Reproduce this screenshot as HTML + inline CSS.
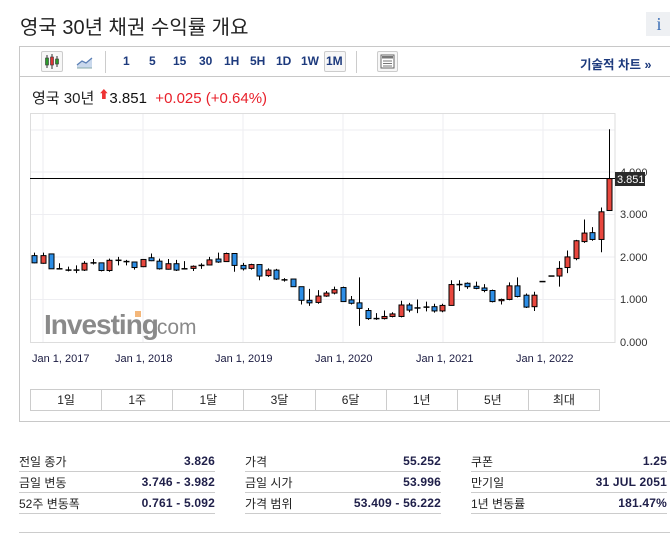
<!DOCTYPE html>
<html><head><meta charset="utf-8"><style>
*{margin:0;padding:0;box-sizing:border-box}
body{width:670px;height:542px;overflow:hidden;background:#fff;font-family:"Liberation Sans","Noto Sans CJK KR",sans-serif;color:#222;position:relative}
.abs{position:absolute}
.title{left:20px;top:11px;font-size:20px;color:#222;white-space:nowrap}
.info{left:646px;top:12px;width:26px;height:24px;background:#eef0f3;color:#3a6db5;font-family:"Liberation Serif",serif;font-size:18px;text-align:center;line-height:24px}
.panel{left:19px;top:46px;width:660px;height:376px;border:1px solid #c8c8c8;border-right:none}
.tb{left:19px;top:46px;width:660px;height:31px;border-bottom:1px solid #c8c8c8}
.tf{top:54px;font-size:12px;font-weight:bold;color:#1d3a7d;white-space:nowrap}
.box{border:1px solid #ccc;border-radius:2px;background:#f7f7f7}
.q{top:87px;left:32px;font-size:15px;white-space:nowrap}
.lab{font-size:11px;color:#1a1a40;white-space:nowrap}
.rng{left:30px;top:389px;width:570px;height:22px;display:flex;border:1px solid #ccc}
.rng div{flex:1;border-right:1px solid #ccc;text-align:center;font-size:12px;line-height:20px;color:#222}
.rng div:last-child{border-right:none}
.st{font-size:12px;white-space:nowrap}
.row{position:absolute;height:21px;border-bottom:1px solid #ccc;display:flex;justify-content:space-between;align-items:center}
.row b{font-weight:bold;color:#20204a;letter-spacing:0.2px}
</style></head><body>
<div class="abs title">영국 30년 채권 수익률 개요</div>
<div class="abs info">i</div>
<div class="abs panel"></div>
<div class="abs tb"></div>
<div class="abs box" style="left:41px;top:51px;width:22px;height:21px"></div>
<svg class="abs" style="left:41px;top:51px" width="22" height="21">
<line x1="6" y1="4" x2="6" y2="17" stroke="#333"/><rect x="4.5" y="7" width="3" height="7" fill="#2a9a2a" stroke="#333" stroke-width=".6"/>
<line x1="11" y1="3" x2="11" y2="18" stroke="#333"/><rect x="9.5" y="6" width="3" height="8" fill="#d33" stroke="#333" stroke-width=".6"/>
<line x1="16" y1="5" x2="16" y2="16" stroke="#333"/><rect x="14.5" y="8" width="3" height="5" fill="#2a9a2a" stroke="#333" stroke-width=".6"/>
</svg>
<svg class="abs" style="left:76px;top:54px" width="18" height="16"><path d="M1 11 L6 7 L10 9 L16 4 L16 14 L1 14Z" fill="#c9d8ec"/><path d="M1 11 L6 7 L10 9 L16 4" stroke="#5b7fb5" fill="none" stroke-width="1.3"/><line x1="1" y1="14" x2="16" y2="14" stroke="#8aa" /></svg>
<div class="abs" style="left:105px;top:51px;width:1px;height:22px;background:#ccc"></div>
<div class="abs tf" style="left:123px">1</div>
<div class="abs tf" style="left:149px">5</div>
<div class="abs tf" style="left:173px">15</div>
<div class="abs tf" style="left:199px">30</div>
<div class="abs tf" style="left:224px">1H</div>
<div class="abs tf" style="left:250px">5H</div>
<div class="abs tf" style="left:276px">1D</div>
<div class="abs tf" style="left:301px">1W</div>
<div class="abs box" style="left:324px;top:51px;width:22px;height:21px"></div>
<div class="abs tf" style="left:326px">1M</div>
<div class="abs" style="left:356px;top:51px;width:1px;height:22px;background:#ccc"></div>
<div class="abs box" style="left:377px;top:51px;width:21px;height:21px"></div>
<svg class="abs" style="left:377px;top:51px" width="21" height="21"><rect x="4" y="4" width="13" height="13" fill="#fff" stroke="#666"/><rect x="5" y="5" width="11" height="2.5" fill="#777"/><line x1="6" y1="10" x2="15" y2="10" stroke="#777"/><line x1="6" y1="12.5" x2="15" y2="12.5" stroke="#777"/><line x1="6" y1="15" x2="15" y2="15" stroke="#777"/></svg>
<div class="abs tf" style="left:580px;font-size:12.5px">기술적 차트 »</div>
<div class="abs q">영국 30년 <span style="color:#e33;font-size:11px;position:relative;top:-5px">&#x2B06;</span><span style="color:#111">3.851</span> <span style="color:#e8202a">&nbsp;+0.025 (+0.64%)</span></div>

<svg class="abs" style="left:0;top:0" width="670" height="420" id="ch">
<g stroke="#eeeef2" stroke-width="1">
<line x1="43" y1="113" x2="43" y2="342"/><line x1="143" y1="113" x2="143" y2="342"/><line x1="243" y1="113" x2="243" y2="342"/><line x1="343" y1="113" x2="343" y2="342"/><line x1="443" y1="113" x2="443" y2="342"/><line x1="543" y1="113" x2="543" y2="342"/>
<line x1="30" y1="130" x2="615" y2="130"/><line x1="30" y1="172" x2="615" y2="172"/><line x1="30" y1="214.5" x2="615" y2="214.5"/><line x1="30" y1="257" x2="615" y2="257"/><line x1="30" y1="299.5" x2="615" y2="299.5"/>
</g>
<rect x="30.5" y="113.5" width="584.5" height="229" fill="none" stroke="#ddd"/>
<text x="44" y="334" font-family="Liberation Sans,sans-serif" font-weight="bold" font-size="28" fill="#8a8a8a" letter-spacing="-1">Investing</text>
<text x="151" y="334" font-family="Liberation Sans,sans-serif" font-size="21" fill="#8a8a8a">.com</text>
<rect x="135" y="311" width="6" height="6" fill="#f4b77a"/>
<g id="cd"></g>
<line x1="30" y1="178.5" x2="615" y2="178.5" stroke="#000"/>
<g font-family="Liberation Sans,sans-serif" font-size="11" fill="#333">
<text x="620" y="176">4.000</text><text x="620" y="218">3.000</text><text x="620" y="261">2.000</text><text x="620" y="303">1.000</text><text x="620" y="346">0.000</text>
</g>
<rect x="615" y="172" width="30" height="14" fill="#2a2a2a"/>
<text x="617" y="183" font-family="Liberation Sans,sans-serif" font-size="11" fill="#fff">3.851</text>
<g font-family="Liberation Sans,sans-serif" font-size="11" fill="#1a1a40">
<text x="32" y="362">Jan 1, 2017</text><text x="115" y="362">Jan 1, 2018</text><text x="215" y="362">Jan 1, 2019</text><text x="315" y="362">Jan 1, 2020</text><text x="416" y="362">Jan 1, 2021</text><text x="516" y="362">Jan 1, 2022</text>
</g>
</svg>
<script>
var d=[[2.03,1.86,2.1,1.85],[1.85,2.03,2.1,1.84],[2.07,1.72,2.07,1.72],[1.72,1.72,1.85,1.71],[1.69,1.69,1.77,1.66],[1.69,1.69,1.8,1.62],[1.69,1.85,1.9,1.67],[1.86,1.86,1.95,1.82],[1.86,1.68,1.86,1.66],[1.68,1.92,1.96,1.65],[1.92,1.92,2.0,1.8],[1.89,1.89,1.93,1.8],[1.88,1.75,1.88,1.7],[1.77,1.94,1.95,1.76],[1.98,1.91,2.08,1.9],[1.9,1.72,1.96,1.7],[1.71,1.84,1.95,1.7],[1.84,1.69,1.93,1.67],[1.72,1.72,1.9,1.72],[1.73,1.78,1.8,1.67],[1.8,1.8,1.85,1.72],[1.81,1.93,2.0,1.8],[1.95,1.88,2.1,1.86],[1.89,2.08,2.1,1.88],[2.08,1.8,2.08,1.65],[1.8,1.72,1.86,1.68],[1.73,1.82,1.84,1.7],[1.82,1.55,1.82,1.45],[1.56,1.69,1.73,1.53],[1.69,1.48,1.72,1.46],[1.46,1.46,1.5,1.42],[1.48,1.3,1.48,1.3],[1.3,0.98,1.3,0.88],[0.98,0.92,1.25,0.85],[0.93,1.08,1.22,0.9],[1.08,1.15,1.2,1.06],[1.15,1.23,1.3,1.12],[1.28,0.95,1.3,0.94],[0.99,0.91,1.08,0.88],[0.92,0.79,1.52,0.38],[0.74,0.55,0.8,0.52],[0.55,0.55,0.68,0.52],[0.55,0.6,0.74,0.53],[0.6,0.66,0.7,0.58],[0.6,0.87,0.97,0.58],[0.87,0.75,0.92,0.7],[0.8,0.8,1.0,0.68],[0.82,0.82,0.95,0.72],[0.83,0.73,0.9,0.69],[0.73,0.86,0.9,0.7],[0.86,1.35,1.45,0.86],[1.35,1.35,1.45,1.2],[1.38,1.3,1.4,1.25],[1.31,1.26,1.42,1.24],[1.27,1.21,1.36,1.17],[1.21,0.95,1.23,0.93],[0.97,1.0,1.02,0.88],[1.0,1.32,1.4,0.98],[1.32,1.07,1.52,1.05],[1.1,0.82,1.14,0.8],[0.83,1.1,1.18,0.73],[1.42,1.42,1.42,1.42],[1.55,1.55,1.55,1.55],[1.55,1.73,1.9,1.3],[1.75,2.0,2.15,1.62],[1.96,2.38,2.4,1.92],[2.36,2.56,2.88,2.33],[2.57,2.41,2.7,2.38],[2.41,3.06,3.16,2.11],[3.09,3.84,5.0,3.09]];
var s='';function Y(v){return 342-42.55*v}
d.forEach(function(c,i){var x=Math.round(34.3+i*8.33)+.5,o=c[0],cl=c[1];
s+='<line x1="'+x+'" x2="'+x+'" y1="'+Y(c[2])+'" y2="'+Y(c[3])+'" stroke="#000"/>';
if(Math.abs(o-cl)<0.03){s+='<line x1="'+(x-3)+'" x2="'+(x+3)+'" y1="'+Y(o)+'" y2="'+Y(o)+'" stroke="#000" stroke-width="1.5"/>';}
else{var t=Y(Math.max(o,cl)),b=Y(Math.min(o,cl));s+='<rect x="'+(x-2.5)+'" y="'+t+'" width="5" height="'+(b-t)+'" fill="'+(cl>o?'#e8473e':'#2d8ee6')+'" stroke="#000" stroke-width="1"/>';}
});
document.getElementById('cd').innerHTML=s;
</script>
<div class="abs rng"><div>1일</div><div>1주</div><div>1달</div><div>3달</div><div>6달</div><div>1년</div><div>5년</div><div>최대</div></div>

<div class="row st" style="left:19px;top:451px;width:196px"><span>전일 종가</span><b>3.826</b></div>
<div class="row st" style="left:19px;top:472px;width:196px"><span>금일 변동</span><b>3.746 - 3.982</b></div>
<div class="row st" style="left:19px;top:493px;width:196px"><span>52주 변동폭</span><b>0.761 - 5.092</b></div>
<div class="row st" style="left:245px;top:451px;width:196px"><span>가격</span><b>55.252</b></div>
<div class="row st" style="left:245px;top:472px;width:196px"><span>금일 시가</span><b>53.996</b></div>
<div class="row st" style="left:245px;top:493px;width:196px"><span>가격 범위</span><b>53.409 - 56.222</b></div>
<div class="row st" style="left:471px;top:451px;width:196px"><span>쿠폰</span><b>1.25</b></div>
<div class="row st" style="left:471px;top:472px;width:196px"><span>만기일</span><b>31 JUL 2051</b></div>
<div class="row st" style="left:471px;top:493px;width:196px"><span>1년 변동률</span><b>181.47%</b></div>
<div class="abs" style="left:19px;top:532px;width:651px;height:1px;background:#ccc"></div>
</body></html>
